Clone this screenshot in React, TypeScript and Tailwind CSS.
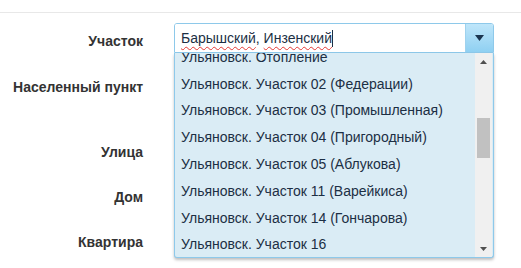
import React from "react";

const labels = [
  { text: "Участок", row: "h-[44px] items-center" },
  { text: "Населенный пункт", row: "h-[67px] items-start pt-[14px]" },
  { text: "Улица", row: "h-[45px] items-center" },
  { text: "Дом", row: "h-[45px] items-center" },
  { text: "Квартира", row: "h-[45px] items-center" },
];

const items = [
  "Ульяновск. Отопление",
  "Ульяновск. Участок 02 (Федерации)",
  "Ульяновск. Участок 03 (Промышленная)",
  "Ульяновск. Участок 04 (Пригородный)",
  "Ульяновск. Участок 05 (Аблукова)",
  "Ульяновск. Участок 11 (Варейкиса)",
  "Ульяновск. Участок 14 (Гончарова)",
  "Ульяновск. Участок 16",
];

export default function App() {
  return (
    <div
      className="w-[521px] h-[268px] bg-white overflow-hidden"
      style={{ fontFamily: '"Liberation Sans", Arial, sans-serif' }}
    >
      <div className="mt-[12px] border-t border-[#e8e8e8] relative">
        <div className="flex flex-col pt-[6px]">
          {labels.map((l) => (
            <div key={l.text} className={`flex ${l.row}`}>
              <div className="w-[143px] text-right text-[14px] font-bold text-[#333]">
                {l.text}
              </div>
            </div>
          ))}
        </div>

        {/* select with open dropdown */}
        <div className="absolute left-[174px] top-[10px] w-[320px]">
          <div className="flex h-[30px] border border-[#8ec9ea] rounded-t-[3px] overflow-hidden">
            <div className="flex-1 bg-white flex items-center pl-[6px] text-[14px] text-[#1c2f44] border-r border-[#9fd2ee]">
              <span className="underline decoration-wavy decoration-[#e53935] decoration-1 underline-offset-[3px]">
                Барышский
              </span>
              <span>,&nbsp;</span>
              <span className="underline decoration-wavy decoration-[#e53935] decoration-1 underline-offset-[3px]">
                Инзенский
              </span>
              <span className="w-px h-[17px] bg-[#1c2f44]" />
            </div>
            <div className="w-[27px] bg-gradient-to-b from-[#bfe6fa] to-[#8fd0f2] flex items-center justify-center">
              <svg width="9" height="6" viewBox="0 0 9 6">
                <path d="M0 0h9L4.5 6z" fill="#1b3550" />
              </svg>
            </div>
          </div>
          <div className="flex h-[205px] bg-[#daecf5] border border-t-0 border-[#8ec9ea] rounded-b-[3px] shadow-[0_2px_3px_rgba(0,0,0,0.25)] overflow-hidden">
            <div className="flex-1 overflow-hidden">
              <div className="-mt-[9px]">
                {items.map((it) => (
                  <div
                    key={it}
                    className="h-[26.8px] flex items-center pl-[6px] text-[14px] text-[#1c2f44] whitespace-nowrap"
                  >
                    {it}
                  </div>
                ))}
              </div>
            </div>
            <div className="w-[17px] bg-[#f0f0f0] flex flex-col items-center mr-[1px]">
              <div className="h-[17px] flex items-center justify-center">
                <svg width="7" height="4" viewBox="0 0 7 4">
                  <path d="M0 4h7L3.5 0z" fill="#505050" />
                </svg>
              </div>
              <div className="mt-[48px] w-[13px] h-[40px] bg-[#c1c1c1]" />
              <div className="flex-1" />
              <div className="h-[17px] flex items-center justify-center">
                <svg width="7" height="4" viewBox="0 0 7 4">
                  <path d="M0 0h7L3.5 4z" fill="#505050" />
                </svg>
              </div>
            </div>
          </div>
        </div>
      </div>
    </div>
  );
}
